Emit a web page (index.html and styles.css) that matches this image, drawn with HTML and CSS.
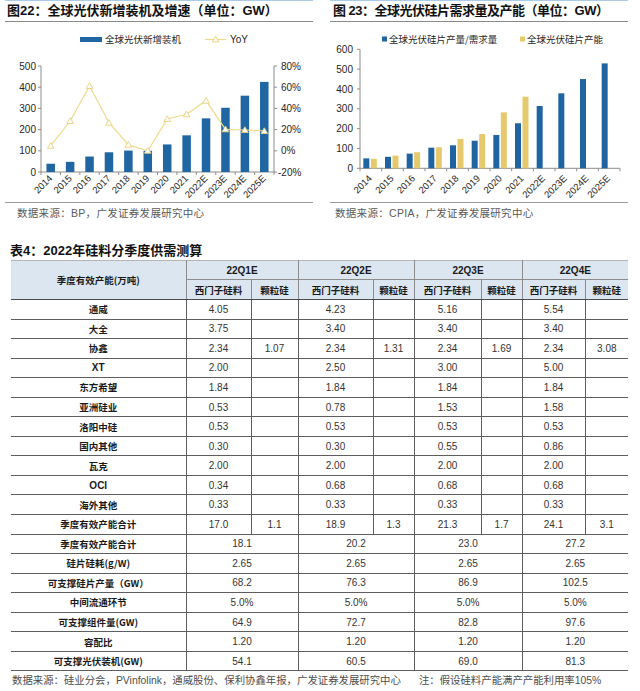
FILE: index.html
```html
<!DOCTYPE html>
<html lang="zh-CN">
<head>
<meta charset="utf-8">
<title>硅料供需</title>
<link rel="stylesheet" href="styles.css">
</head>
<body>
<div class="charts">
  <section class="panel panel-left">
    <div class="title">图22：全球光伏新增装机及增速（单位：GW）</div>
    <svg class="chart" width="308" height="180" viewBox="5 22 308 180" xmlns="http://www.w3.org/2000/svg">
      <!-- legend -->
      <rect x="80" y="37" width="22" height="5" fill="#1f66a3"/>
      <text class="lg" x="105" y="43">全球光伏新增装机</text>
      <line x1="205" y1="39.5" x2="226" y2="39.5" stroke="#efd98a" stroke-width="1.2"/>
      <path d="M215.5 36.3 L218.8 42 L212.2 42 Z" fill="#fff" stroke="#e8d07a" stroke-width="0.9"/>
      <text class="ax" x="230" y="43">YoY</text>
      <!-- axes -->
      <g stroke="#8c8c8c" stroke-width="1" fill="none">
        <line x1="41" y1="66" x2="41" y2="172"/>
        <line x1="274" y1="66" x2="274" y2="172"/>
        <line x1="41" y1="172" x2="274" y2="172"/>
        <path d="M38 66H41M38 87.2H41M38 108.4H41M38 129.6H41M38 150.8H41M38 172H41"/>
        <path d="M274 66H277M274 87.2H277M274 108.4H277M274 129.6H277M274 150.8H277M274 172H277"/>
        <path d="M41 172V175M60.42 172V175M79.83 172V175M99.25 172V175M118.67 172V175M138.08 172V175M157.5 172V175M176.92 172V175M196.33 172V175M215.75 172V175M235.17 172V175M254.58 172V175M274 172V175"/>
      </g>
      <g class="ax" text-anchor="end">
        <text x="36" y="69.5">500</text>
        <text x="36" y="90.7">400</text>
        <text x="36" y="111.9">300</text>
        <text x="36" y="133.1">200</text>
        <text x="36" y="154.3">100</text>
        <text x="36" y="175.5">0</text>
      </g>
      <g class="ax">
        <text x="281" y="69.5">80%</text>
        <text x="281" y="90.7">60%</text>
        <text x="281" y="111.9">40%</text>
        <text x="281" y="133.1">20%</text>
        <text x="281" y="154.3">0%</text>
        <text x="278" y="175.5">-20%</text>
      </g>
      <!-- bars -->
      <g fill="#1f66a3">
        <rect x="46.46" y="163.73" width="8.5" height="8.27"/>
        <rect x="65.88" y="161.82" width="8.5" height="10.18"/>
        <rect x="85.29" y="156.52" width="8.5" height="15.48"/>
        <rect x="104.71" y="152.28" width="8.5" height="19.72"/>
        <rect x="124.13" y="150.59" width="8.5" height="21.41"/>
        <rect x="143.54" y="150.8" width="8.5" height="21.2"/>
        <rect x="162.96" y="144.44" width="8.5" height="27.56"/>
        <rect x="182.38" y="135.32" width="8.5" height="36.68"/>
        <rect x="201.79" y="118.36" width="8.5" height="53.64"/>
        <rect x="221.21" y="107.76" width="8.5" height="64.24"/>
        <rect x="240.63" y="95.68" width="8.5" height="76.32"/>
        <rect x="260.04" y="81.9" width="8.5" height="90.1"/>
      </g>
      <!-- yoy line -->
      <polyline fill="none" stroke="#efd98a" stroke-width="1.2" points="50.71,145.7 70.13,121 89.54,86 108.96,122.7 128.38,144.7 147.79,150.7 167.21,119 186.63,114.3 206.04,100.7 225.46,129.3 244.88,130 264.29,131"/>
      <g fill="#fff" stroke="#e8d07a" stroke-width="0.9">
        <path d="M50.71 142.5l3.3 5.7h-6.6z"/>
        <path d="M70.13 117.8l3.3 5.7h-6.6z"/>
        <path d="M89.54 82.8l3.3 5.7h-6.6z"/>
        <path d="M108.96 119.5l3.3 5.7h-6.6z"/>
        <path d="M128.38 141.5l3.3 5.7h-6.6z"/>
        <path d="M147.79 147.5l3.3 5.7h-6.6z"/>
        <path d="M167.21 115.8l3.3 5.7h-6.6z"/>
        <path d="M186.63 111.1l3.3 5.7h-6.6z"/>
        <path d="M206.04 97.5l3.3 5.7h-6.6z"/>
        <path d="M225.46 126.1l3.3 5.7h-6.6z"/>
        <path d="M244.88 126.8l3.3 5.7h-6.6z"/>
        <path d="M264.29 127.8l3.3 5.7h-6.6z"/>
      </g>
      <!-- x labels -->
      <g class="xl" text-anchor="end">
        <text transform="translate(53,179) rotate(-45)">2014</text>
        <text transform="translate(72.4,179) rotate(-45)">2015</text>
        <text transform="translate(91.8,179) rotate(-45)">2016</text>
        <text transform="translate(111.2,179) rotate(-45)">2017</text>
        <text transform="translate(130.6,179) rotate(-45)">2018</text>
        <text transform="translate(150,179) rotate(-45)">2019</text>
        <text transform="translate(169.4,179) rotate(-45)">2020</text>
        <text transform="translate(188.8,179) rotate(-45)">2021</text>
        <text transform="translate(208.2,179) rotate(-45)">2022E</text>
        <text transform="translate(227.6,179) rotate(-45)">2023E</text>
        <text transform="translate(247,179) rotate(-45)">2024E</text>
        <text transform="translate(266.4,179) rotate(-45)">2025E</text>
      </g>
    </svg>
    <div class="source">数据来源：BP，广发证券发展研究中心</div>
  </section>

  <section class="panel panel-right">
    <div class="title">图 23：全球光伏硅片需求量及产能（单位：GW）</div>
    <svg class="chart" width="298" height="180" viewBox="330 22 298 180" xmlns="http://www.w3.org/2000/svg">
      <rect x="382" y="36.5" width="5" height="5" fill="#1f64a0"/>
      <text class="lg" x="389" y="42.5">全球光伏硅片产量/需求量</text>
      <rect x="520" y="36.5" width="5" height="5" fill="#e6c96c"/>
      <text class="lg" x="527" y="42.5">全球光伏硅片产能</text>
      <g stroke="#8c8c8c" stroke-width="1" fill="none">
        <line x1="360" y1="49.3" x2="360" y2="168.3"/>
        <line x1="360" y1="168.3" x2="620" y2="168.3"/>
        <path d="M357 49.3H360M357 69.13H360M357 88.97H360M357 108.8H360M357 128.63H360M357 148.47H360M357 168.3H360"/>
        <path d="M360 168.3V171.3M381.67 168.3V171.3M403.33 168.3V171.3M425 168.3V171.3M446.67 168.3V171.3M468.33 168.3V171.3M490 168.3V171.3M511.67 168.3V171.3M533.33 168.3V171.3M555 168.3V171.3M576.67 168.3V171.3M598.33 168.3V171.3M620 168.3V171.3"/>
      </g>
      <g class="ax" text-anchor="end">
        <text x="353" y="52.8">600</text>
        <text x="353" y="72.6">500</text>
        <text x="353" y="92.5">400</text>
        <text x="353" y="112.3">300</text>
        <text x="353" y="132.1">200</text>
        <text x="353" y="152">100</text>
        <text x="353" y="171.8">0</text>
      </g>
      <g fill="#1f64a0">
        <rect x="363.33" y="158.38" width="6" height="9.92"/>
        <rect x="385" y="156.8" width="6" height="11.5"/>
        <rect x="406.67" y="153.62" width="6" height="14.68"/>
        <rect x="428.33" y="147.67" width="6" height="20.63"/>
        <rect x="450" y="145.29" width="6" height="23.01"/>
        <rect x="471.67" y="140.73" width="6" height="27.57"/>
        <rect x="493.33" y="134.98" width="6" height="33.32"/>
        <rect x="515" y="123.28" width="6" height="45.02"/>
        <rect x="536.67" y="106.02" width="6" height="62.28"/>
        <rect x="558.33" y="93.33" width="6" height="74.97"/>
        <rect x="580" y="79.05" width="6" height="89.25"/>
        <rect x="601.67" y="63.38" width="6" height="104.92"/>
      </g>
      <g fill="#e6c96c">
        <rect x="370.83" y="158.78" width="6" height="9.52"/>
        <rect x="392.5" y="155.61" width="6" height="12.69"/>
        <rect x="414.17" y="152.24" width="6" height="16.06"/>
        <rect x="435.83" y="147.28" width="6" height="21.02"/>
        <rect x="457.5" y="138.95" width="6" height="29.35"/>
        <rect x="479.17" y="133.99" width="6" height="34.31"/>
        <rect x="500.83" y="112.37" width="6" height="55.93"/>
        <rect x="522.5" y="96.7" width="6" height="71.6"/>
      </g>
      <g class="xl" text-anchor="end">
        <text transform="translate(372.5,179) rotate(-45)">2014</text>
        <text transform="translate(394.2,179) rotate(-45)">2015</text>
        <text transform="translate(415.8,179) rotate(-45)">2016</text>
        <text transform="translate(437.5,179) rotate(-45)">2017</text>
        <text transform="translate(459.2,179) rotate(-45)">2018</text>
        <text transform="translate(480.8,179) rotate(-45)">2019</text>
        <text transform="translate(502.5,179) rotate(-45)">2020</text>
        <text transform="translate(524.2,179) rotate(-45)">2021</text>
        <text transform="translate(545.8,179) rotate(-45)">2022E</text>
        <text transform="translate(567.5,179) rotate(-45)">2023E</text>
        <text transform="translate(589.2,179) rotate(-45)">2024E</text>
        <text transform="translate(610.8,179) rotate(-45)">2025E</text>
      </g>
    </svg>
    <div class="source">数据来源：CPIA，广发证券发展研究中心</div>
  </section>
</div>

<div class="table-title">表4：2022年硅料分季度供需测算</div>
<table class="supply">
  <colgroup>
    <col class="c0"><col class="c1"><col class="c2"><col class="c3"><col class="c4"><col class="c5"><col class="c6"><col class="c7"><col class="c8">
  </colgroup>
  <thead>
    <tr class="h1">
      <th rowspan="2" class="corner">季度有效产能(万吨)</th>
      <th colspan="2" class="q">22Q1E</th>
      <th colspan="2" class="q">22Q2E</th>
      <th colspan="2" class="q">22Q3E</th>
      <th colspan="2" class="q last">22Q4E</th>
    </tr>
    <tr class="h2">
      <th>西门子硅料</th><th class="g">颗粒硅</th>
      <th>西门子硅料</th><th class="g">颗粒硅</th>
      <th>西门子硅料</th><th class="g">颗粒硅</th>
      <th>西门子硅料</th><th class="g last">颗粒硅</th>
    </tr>
  </thead>
  <tbody>
    <tr><th>通威</th><td>4.05</td><td class="g"></td><td>4.23</td><td class="g"></td><td>5.16</td><td class="g"></td><td>5.54</td><td class="last"></td></tr>
    <tr><th>大全</th><td>3.75</td><td class="g"></td><td>3.40</td><td class="g"></td><td>3.40</td><td class="g"></td><td>3.40</td><td class="last"></td></tr>
    <tr><th>协鑫</th><td>2.34</td><td class="g">1.07</td><td>2.34</td><td class="g">1.31</td><td>2.34</td><td class="g">1.69</td><td>2.34</td><td class="last">3.08</td></tr>
    <tr><th class="lat">XT</th><td>2.00</td><td class="g"></td><td>2.50</td><td class="g"></td><td>3.00</td><td class="g"></td><td>5.00</td><td class="last"></td></tr>
    <tr><th>东方希望</th><td>1.84</td><td class="g"></td><td>1.84</td><td class="g"></td><td>1.84</td><td class="g"></td><td>1.84</td><td class="last"></td></tr>
    <tr><th>亚洲硅业</th><td>0.53</td><td class="g"></td><td>0.78</td><td class="g"></td><td>1.53</td><td class="g"></td><td>1.58</td><td class="last"></td></tr>
    <tr><th>洛阳中硅</th><td>0.53</td><td class="g"></td><td>0.53</td><td class="g"></td><td>0.53</td><td class="g"></td><td>0.53</td><td class="last"></td></tr>
    <tr><th>国内其他</th><td>0.30</td><td class="g"></td><td>0.30</td><td class="g"></td><td>0.55</td><td class="g"></td><td>0.86</td><td class="last"></td></tr>
    <tr><th>瓦克</th><td>2.00</td><td class="g"></td><td>2.00</td><td class="g"></td><td>2.00</td><td class="g"></td><td>2.00</td><td class="last"></td></tr>
    <tr><th class="lat">OCI</th><td>0.34</td><td class="g"></td><td>0.68</td><td class="g"></td><td>0.68</td><td class="g"></td><td>0.68</td><td class="last"></td></tr>
    <tr><th>海外其他</th><td>0.33</td><td class="g"></td><td>0.33</td><td class="g"></td><td>0.33</td><td class="g"></td><td>0.33</td><td class="last"></td></tr>
    <tr><th>季度有效产能合计</th><td>17.0</td><td class="g">1.1</td><td>18.9</td><td class="g">1.3</td><td>21.3</td><td class="g">1.7</td><td>24.1</td><td class="last">3.1</td></tr>
    <tr><th>季度有效产能合计</th><td colspan="2">18.1</td><td colspan="2">20.2</td><td colspan="2">23.0</td><td colspan="2" class="last">27.2</td></tr>
    <tr><th>硅片硅耗(g/W)</th><td colspan="2">2.65</td><td colspan="2">2.65</td><td colspan="2">2.65</td><td colspan="2" class="last">2.65</td></tr>
    <tr><th>可支撑硅片产量（GW）</th><td colspan="2">68.2</td><td colspan="2">76.3</td><td colspan="2">86.9</td><td colspan="2" class="last">102.5</td></tr>
    <tr><th>中间流通环节</th><td colspan="2">5.0%</td><td colspan="2">5.0%</td><td colspan="2">5.0%</td><td colspan="2" class="last">5.0%</td></tr>
    <tr><th>可支撑组件量(GW)</th><td colspan="2">64.9</td><td colspan="2">72.7</td><td colspan="2">82.8</td><td colspan="2" class="last">97.6</td></tr>
    <tr><th>容配比</th><td colspan="2">1.20</td><td colspan="2">1.20</td><td colspan="2">1.20</td><td colspan="2" class="last">1.20</td></tr>
    <tr><th>可支撑光伏装机(GW)</th><td colspan="2">54.1</td><td colspan="2">60.5</td><td colspan="2">69.0</td><td colspan="2" class="last">81.3</td></tr>
  </tbody>
</table>
<div class="note"><span>数据来源：硅业分会，PVinfolink，通威股份、保利协鑫年报，广发证券发展研究中心</span><span class="note-r">注：假设硅料产能满产产能利用率105%</span></div>
</body>
</html>
```

FILE: styles.css
```css
* { box-sizing: border-box; }
html, body { margin: 0; padding: 0; background: #fff; }
body {
  width: 640px;
  height: 691px;
  overflow: hidden;
  font-family: "Liberation Sans", "Noto Sans CJK SC", sans-serif;
  color: #1a1a1a;
}
.charts {
  display: flex;
  padding-left: 5px;
  gap: 17px;
}
.panel {
  border-top: 1px solid #a9cbe8;
}
.panel-left { width: 308px; }
.panel-right { width: 298px; }
.title {
  height: 21px;
  line-height: 20px;
  padding-left: 2px;
  font-size: 13px;
  font-weight: 700;
  color: #111;
  border-bottom: 1px solid #8a8a8a;
  white-space: nowrap;
}
.panel-right .title { padding-left: 3px; letter-spacing: -0.5px; }
.chart { display: block; }
.chart text {
  font-family: "Liberation Sans", "Noto Sans CJK SC", sans-serif;
  fill: #262626;
}
.chart .ax { font-size: 10px; }
.chart .xl { font-size: 9.5px; }
.chart .lg { font-size: 9.5px; font-family: "Noto Sans CJK SC", sans-serif; }
.source {
  border-top: 1px solid #9a9a9a;
  height: 21px;
  line-height: 20px;
  padding-left: 12px;
  font-size: 10.5px;
  color: #595959;
  letter-spacing: 0.3px;
  white-space: nowrap;
}
.panel-right .source { padding-left: 5px; }

.table-title {
  margin-top: 18px;
  height: 19px;
  line-height: 19px;
  padding-left: 10px;
  font-size: 13px;
  font-weight: 700;
  color: #111;
}
.supply {
  margin-left: 11px;
  width: 617px;
  table-layout: fixed;
  border-collapse: collapse;
  font-size: 10px;
}
.c0 { width: 175px; }
.c1 { width: 65px; }
.c2 { width: 47px; }
.c3 { width: 75px; }
.c4 { width: 41px; }
.c5 { width: 67px; }
.c6 { width: 41px; }
.c7 { width: 63px; }
.c8 { width: 43px; }
.supply th, .supply td {
  padding: 0;
  text-align: center;
  vertical-align: middle;
  white-space: nowrap;
  border-right: 1px solid #5e5e5e;
  border-bottom: 1px solid #5e5e5e;
}
.supply .last { border-right: none; }
.supply thead th {
  background: #dce6f1;
  font-family: "Noto Sans CJK SC", sans-serif;
  font-weight: 700;
  font-size: 9.5px;
  color: #1a1a1a;
  border-color: #8c8c8c;
}
.supply thead tr.h1 th { border-top: 1px solid #b5b5b5; height: 19px; }
.supply thead tr.h1 th.q { font-family: "Liberation Sans", sans-serif; font-size: 10px; }
.supply thead tr.h2 th { height: 20px; border-bottom-color: #4d4d4d; }
.supply thead th.corner { border-bottom-color: #4d4d4d; }
.supply tbody tr { height: 19.55px; }
.supply tbody th {
  font-family: "Noto Sans CJK SC", sans-serif;
  font-weight: 700;
  font-size: 9.5px;
  color: #1a1a1a;
}
.supply tbody th.lat { font-family: "Liberation Sans", sans-serif; font-size: 10px; }
.supply tbody td {
  color: #333;
  font-family: "Liberation Sans", sans-serif;
}
.note {
  display: flex;
  gap: 18px;
  padding-left: 12px;
  height: 20px;
  line-height: 20px;
  font-size: 10.4px;
  color: #4d4d4d;
  white-space: nowrap;
}
```
